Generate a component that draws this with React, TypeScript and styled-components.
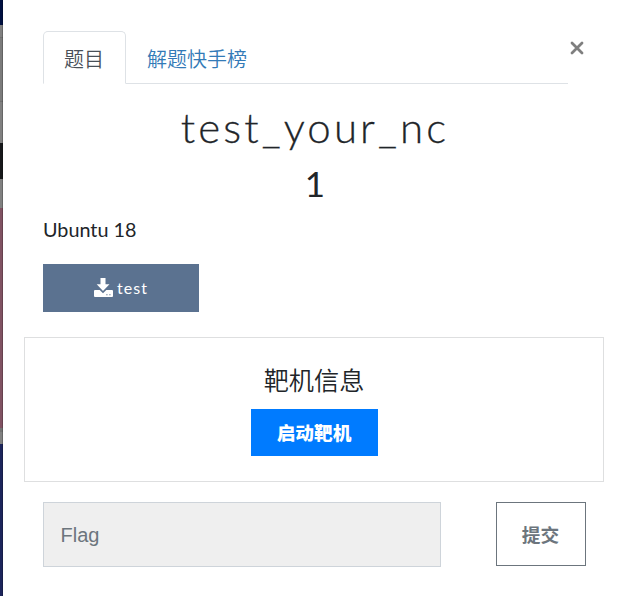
import React from "react";
import styled, { createGlobalStyle } from "styled-components";

const GlobalStyle = createGlobalStyle`
  *, *::before, *::after { box-sizing: border-box; }
  body {
    margin: 0;
    background: #fff;
    color: #212529;
    font-family: Lato, "Noto Sans CJK SC", sans-serif;
    font-size: 20px;
    line-height: 30px;
  }
`;

const Page = styled.div`
  display: flex;
  height: 596px;
  overflow: hidden;
`;

const Backdrop = styled.div`
  display: flex;
  flex-direction: column;
  width: 3px;
`;

const Band = styled.div<{ $height: number; $color: string }>`
  flex: none;
  width: 3px;
  height: ${(p) => p.$height}px;
  background: ${(p) => p.$color};
  border-right: 1px solid rgba(0, 0, 0, 0.2);
`;

const Dialog = styled.main`
  flex: 1;
  display: flex;
  flex-direction: column;
  padding: 31px 14px 0 21px;
`;

const Header = styled.header`
  display: flex;
  height: 53px;
  padding-left: 19px;
`;

const Tabs = styled.nav`
  display: flex;
  width: 525px;
  border-bottom: 1px solid #dee2e6;
`;

const Tab = styled.a<{ $active?: boolean }>`
  height: 53px;
  padding: 12px 21px 0 20px;
  border: 1px solid;
  border-color: ${(p) => (p.$active ? "#dee2e6 #dee2e6 #fff" : "transparent")};
  border-radius: 5px 5px 0 0;
  background: ${(p) => (p.$active ? "#fff" : "transparent")};
  color: ${(p) => (p.$active ? "#495057" : "#337ab7")};
  font-family: "Noto Sans CJK SC", sans-serif;
  font-weight: 350;
  line-height: 30px;
  text-decoration: none;
`;

const Close = styled.button`
  width: 18px;
  height: 34px;
  padding: 0;
  border: 0;
  background: none;
  color: #7f7f7f;
  svg { display: block; margin: 0 0 0 2px; }
`;

const Title = styled.h2`
  margin: 18px 0 0;
  padding-left: 2px;
  font-size: 42px;
  font-weight: 300;
  line-height: 50px;
  letter-spacing: 3.1px;
  text-align: center;
  -webkit-text-stroke: 0.3px currentColor;
`;

const Score = styled.h3`
  margin: 8px 0 0;
  padding-left: 2px;
  font-size: 35px;
  font-weight: 400;
  line-height: 46px;
  text-align: center;
`;

const Description = styled.p`
  margin: 8px 0 0 19px;
  font-size: 19.8px;
  line-height: 30px;
`;

const Download = styled.a`
  display: flex;
  align-items: center;
  justify-content: center;
  gap: 4px;
  width: 156px;
  height: 48px;
  margin: 20px 0 25px 19px;
  background: #5b7290;
  color: #fff;
  font-size: 16px;
  letter-spacing: 1px;
  svg { margin-bottom: 2px; }
`;

const Machine = styled.section`
  display: flex;
  flex-direction: column;
  align-items: center;
  height: 145px;
  width: 580px;
  padding-top: 23px;
  border: 1px solid #dedfe0;
`;

const MachineTitle = styled.h5`
  margin: 0 0 12px;
  font-family: "Noto Sans CJK SC", sans-serif;
  font-size: 25.2px;
  font-weight: 350;
  line-height: 36px;
`;

const Launch = styled.button`
  width: 127px;
  height: 47px;
  padding: 0 0 2px;
  border: 0;
  background: #007bff;
  color: #fff;
  font: 900 18.7px/45px "Noto Sans CJK SC", sans-serif;
`;

const Answer = styled.form`
  display: flex;
  justify-content: space-between;
  width: 543px;
  margin: 20px 0 0 19px;
`;

const Flag = styled.input`
  width: 398px;
  height: 65px;
  padding: 2px 16px 0 16.5px;
  border: 1px solid #ced4da;
  border-radius: 0;
  background: #efefef;
  font: 20px "Liberation Sans", Arial, sans-serif;
  &::placeholder { color: #6c757d; opacity: 1; }
`;

const Submit = styled.button`
  width: 90px;
  height: 64px;
  padding: 0 1px 1px 0;
  border: 1px solid #6c757d;
  background: #fff;
  color: #6c757d;
  font: 700 18.7px/28px "Noto Sans CJK SC", sans-serif;
`;

const bands: [number, string][] = [
  [25, "#001040"],
  [12, "#808080"],
  [1, "#707070"],
  [63, "#7b7b7b"],
  [1, "#707070"],
  [41, "#808080"],
  [36, "#17181a"],
  [29, "#808080"],
  [220, "#805262"],
  [4, "#737373"],
  [12, "#808080"],
  [152, "#1c255b"],
];

const DownloadIcon = () => (
  <svg width="19" height="19" viewBox="0 0 19 19" fill="currentColor">
    <path d="M6.5 0h5v6.2h4L9 13 2.7 6.2h3.8z" />
    <path
      fillRule="evenodd"
      d="M1 12h4.7L9 15.3l3.3-3.3H18q1 0 1 1v5q0 1-1 1H1q-1 0-1-1v-5q0-1 1-1zM12.3 16.2v1h1.2v-1zM15.3 16.2v1h1.2v-1z"
    />
  </svg>
);

export default function App() {
  return (
    <>
      <GlobalStyle />
      <Page>
        <Backdrop>
          {bands.map(([height, color], i) => (
            <Band key={i} $height={height} $color={color} />
          ))}
        </Backdrop>
        <Dialog>
          <Header>
            <Tabs>
              <Tab $active>题目</Tab>
              <Tab>解题快手榜</Tab>
            </Tabs>
            <Close aria-label="Close">
              <svg width="14" height="14" viewBox="0 0 14 14">
                <path d="M2 2l10 10M12 2L2 12" stroke="currentColor" strokeWidth="2.8" strokeLinecap="round" />
              </svg>
            </Close>
          </Header>
          <Title>test_your_nc</Title>
          <Score>1</Score>
          <Description>Ubuntu 18</Description>
          <Download>
            <DownloadIcon />
            test
          </Download>
          <Machine>
            <MachineTitle>靶机信息</MachineTitle>
            <Launch>启动靶机</Launch>
          </Machine>
          <Answer>
            <Flag placeholder="Flag" />
            <Submit type="button">提交</Submit>
          </Answer>
        </Dialog>
      </Page>
    </>
  );
}
